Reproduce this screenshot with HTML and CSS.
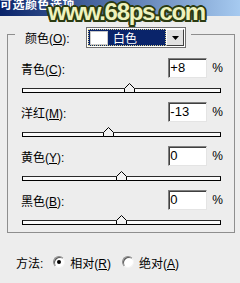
FILE: index.html
```html
<!DOCTYPE html>
<html lang="zh-CN">

<head>
    <meta charset="UTF-8">
    <title>可选颜色选项</title>
    <link rel="stylesheet" href="styles.css">
</head>

<body>
    <div class="titlebar"><span class="title">可选颜色选项</span></div>
    <div class="watermark">www.68ps.com</div>

    <div class="group">
        <div class="group-head">
            <span class="head-label">颜色(<u>O</u>):</span>
            <div class="select">
                <div class="select-field">
                    <span class="swatch"></span>
                    <span class="select-text">白色</span>
                </div>
                <div class="select-btn">
                    <svg width="7" height="4" viewBox="0 0 7 4"><path d="M0 0H7L3.5 4Z" fill="#000"/></svg>
                </div>
            </div>
        </div>

        <div class="row">
            <span class="label">青色(<u>C</u>):</span>
            <div class="num">+8</div>
            <span class="pct">%</span>
        </div>
        <div class="slider">
            <div class="track"></div>
            <svg class="thumb" style="left: 102px" width="11" height="10" viewBox="0 0 11 10"><path d="M0.5 9.5V5.5L5.5 0.5L10.5 5.5V9.5Z" fill="#f2f2f2" stroke="#000"/></svg>
        </div>

        <div class="row">
            <span class="label">洋红(<u>M</u>):</span>
            <div class="num">-13</div>
            <span class="pct">%</span>
        </div>
        <div class="slider">
            <div class="track"></div>
            <svg class="thumb" style="left: 81px" width="11" height="10" viewBox="0 0 11 10"><path d="M0.5 9.5V5.5L5.5 0.5L10.5 5.5V9.5Z" fill="#f2f2f2" stroke="#000"/></svg>
        </div>

        <div class="row">
            <span class="label">黄色(<u>Y</u>):</span>
            <div class="num">0</div>
            <span class="pct">%</span>
        </div>
        <div class="slider">
            <div class="track"></div>
            <svg class="thumb" style="left: 94px" width="11" height="10" viewBox="0 0 11 10"><path d="M0.5 9.5V5.5L5.5 0.5L10.5 5.5V9.5Z" fill="#f2f2f2" stroke="#000"/></svg>
        </div>

        <div class="row">
            <span class="label">黑色(<u>B</u>):</span>
            <div class="num">0</div>
            <span class="pct">%</span>
        </div>
        <div class="slider">
            <div class="track"></div>
            <svg class="thumb" style="left: 94px" width="11" height="10" viewBox="0 0 11 10"><path d="M0.5 9.5V5.5L5.5 0.5L10.5 5.5V9.5Z" fill="#f2f2f2" stroke="#000"/></svg>
        </div>
    </div>

    <div class="method">
        <span class="method-label">方法:</span>
        <span class="radio checked"></span>
        <span class="radio-label">相对(<u>R</u>)</span>
        <span class="radio second"></span>
        <span class="radio-label">绝对(<u>A</u>)</span>
    </div>
</body>

</html>
```
FILE: styles.css
```css
* {
    margin: 0;
    padding: 0;
    box-sizing: border-box;
}

body {
    position: relative;
    width: 240px;
    height: 283px;
    overflow: hidden;
    background-color: #ededed;
    font-family: "Liberation Sans", "Noto Sans CJK SC", sans-serif;
    font-size: 12px;
    color: #000;
}

u {
    text-decoration: underline;
}

/* 标题栏 */
.titlebar {
    height: 16px;
    overflow: hidden;
    background: linear-gradient(to right, #0a246a, #a6caf0);
}

.title {
    display: block;
    margin-top: -3px;
    color: #fff;
    font-weight: bold;
    font-size: 12px;
    line-height: 16px;
    letter-spacing: 0.5px;
}

/* 水印 */
.watermark {
    position: absolute;
    left: 48px;
    top: 0;
    font-family: "Liberation Sans", sans-serif;
    font-weight: bold;
    font-size: 24px;
    line-height: 24px;
    letter-spacing: -1.3px;
    color: #eef2bd;
    text-shadow: 2px 0 0 #2b3b12, -2px 0 0 #2b3b12, 0 2px 0 #2b3b12, 0 -2px 0 #2b3b12,
        1.5px 1.5px 0 #2b3b12, -1.5px 1.5px 0 #2b3b12, 1.5px -1.5px 0 #2b3b12, -1.5px -1.5px 0 #2b3b12;
}

/* 分组框 */
.group {
    margin: 18px 5px 0 7px;
    padding-bottom: 6px;
    border: 1px solid #8e8e8e;
}

.group-head {
    display: flex;
    align-items: center;
    width: max-content;
    height: 21px;
    margin: -8px 0 0 7px;
    padding: 0 5px 0 10px;
    background-color: #ededed;
}

.head-label {
    width: 61px;
}

.select {
    display: flex;
    width: 100px;
    height: 21px;
    padding: 1px;
    border: 1px solid #6f6f6f;
    background-color: #fff;
}

.select-field {
    flex: 1;
    display: flex;
    align-items: center;
    padding-left: 2px;
    background-color: #0a246a;
    outline: 1px dotted #d8d090;
    outline-offset: -1px;
}

.swatch {
    width: 18px;
    height: 14px;
    background-color: #fff;
    border: 1px solid #c8c8c8;
}

.select-text {
    margin-left: 5px;
    color: #fff;
}

.select-btn {
    width: 18px;
    display: flex;
    align-items: center;
    justify-content: center;
    background-color: #e2e2e2;
    border: 1px solid;
    border-color: #fff #404040 #404040 #fff;
}

/* 数值行 */
.row {
    display: flex;
    align-items: center;
    height: 20px;
    margin-top: 8px;
    padding: 0 11px 0 13px;
}

.group-head + .row {
    margin-top: 10px;
}

.label {
    flex: 1;
}

.num {
    width: 39px;
    height: 20px;
    padding-left: 1px;
    background-color: #fff;
    border: 1px solid;
    border-color: #7f7f7f #e4e4e4 #e4e4e4 #7f7f7f;
    box-shadow: inset 1px 1px #404040;
    font-size: 13px;
    line-height: 18px;
}

.pct {
    margin-left: 5px;
    font-size: 12px;
}

/* 滑块 */
.slider {
    position: relative;
    height: 16px;
    margin: 0 13px 0 14px;
    padding-top: 10px;
}

.track {
    height: 5px;
    border: 1px solid #000;
    border-top-color: #2a2a2a;
    background-color: #fafafa;
}

.thumb {
    position: absolute;
    top: 5px;
    display: block;
}

/* 方法 */
.method {
    display: flex;
    align-items: center;
    height: 16px;
    margin-top: 21px;
    padding-left: 16px;
}

.radio {
    position: relative;
    width: 12px;
    height: 12px;
    margin: 0 4px 0 10px;
    border-radius: 50%;
    background-color: #fff;
    border: 1px solid;
    border-color: #8a8a8a #f4f4f4 #f4f4f4 #8a8a8a;
    box-shadow: inset 1px 1px #5a5a5a;
}

.radio.second {
    margin-left: 11px;
}

.radio.checked::after {
    content: "";
    position: absolute;
    left: 3px;
    top: 3px;
    width: 4px;
    height: 4px;
    border-radius: 50%;
    background-color: #000;
}

.radio-label {
    margin-left: 1px;
}
```
